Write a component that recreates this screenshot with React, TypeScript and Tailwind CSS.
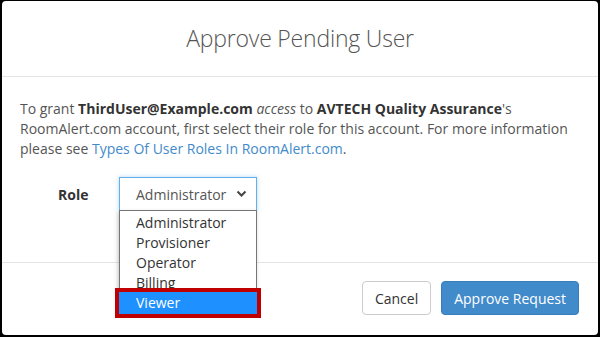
import React from "react";

const roles = ["Administrator", "Provisioner", "Operator", "Billing", "Viewer"];

const App: React.FC = () => {
  return (
    <div className="w-[600px] h-[337px] bg-black pt-px pl-[2px] pr-[2px] pb-[2px] overflow-hidden">
      <div
        className="relative w-full h-full bg-white rounded-[4px] flex flex-col text-[#555]"
        style={{ fontFamily: '"Open Sans", "Liberation Sans", sans-serif' }}
      >
        <div className="h-[76px] border-b border-[#e5e5e5] flex items-center justify-center">
          <h1 className="text-[23px] font-light text-[#555] tracking-[-0.2px]">Approve Pending User</h1>
        </div>

        <div className="flex-1 px-[18px] pt-[22px]">
          <p className="text-[14px] leading-[20px]">
            To grant <b className="text-[#333]">ThirdUser@Example.com</b> <i>access</i> to{" "}
            <b className="text-[#333]">AVTECH Quality Assurance</b>'s RoomAlert.com account, first select their
            role for this account. For more information please see{" "}
            <a className="text-[#428bca]">Types Of User Roles In RoomAlert.com</a>.
          </p>

          <div className="flex items-center mt-[18px]">
            <div className="w-[99px] pl-[38px] text-[14px] font-bold text-[#333]">Role</div>
            <div className="relative">
              <div className="w-[138px] h-[34px] border border-[#66afe9] shadow-[0_0_4px_rgba(102,175,233,0.5)] flex items-center justify-between pl-[16px] pr-[9px] text-[14px] text-[#555]">
                <span>Administrator</span>
                <svg width="11" height="8" viewBox="0 0 11 8" className="text-[#444]">
                  <path d="M1.5 1.5 L5.5 5.5 L9.5 1.5" fill="none" stroke="currentColor" strokeWidth="2" />
                </svg>
              </div>
              <div className="absolute left-0 top-[33px] w-[138px] pt-[2px] bg-white border border-[#767676] shadow-[-1px_2px_4px_rgba(0,0,0,0.25)] z-10">
                {roles.map((r) =>
                  r === "Viewer" ? (
                    <div
                      key={r}
                      className="relative -mx-[5px] -mt-[5px] -mb-[6px] h-[30px] border-[4px] border-[#c00000] bg-[#1e90ff] text-white pl-[17px] leading-[22px] text-[14px]"
                    >
                      {r}
                    </div>
                  ) : (
                    <div key={r} className="h-[20px] leading-[20px] pl-[16px] text-[14px] text-[#333]">
                      {r}
                    </div>
                  )
                )}
              </div>
            </div>
          </div>
        </div>

        <div className="h-[73px] border-t border-[#e5e5e5] flex items-start justify-end gap-[10px] pt-[18px] pr-[19px]">
          <button className="h-[34px] px-[12px] border border-[#ccc] rounded-[4px] bg-white text-[#333] text-[14px]">
            Cancel
          </button>
          <button className="h-[34px] px-[12px] border border-[#357ebd] rounded-[4px] bg-[#428bca] text-white text-[14px]">
            Approve Request
          </button>
        </div>
      </div>
    </div>
  );
};

export default App;
